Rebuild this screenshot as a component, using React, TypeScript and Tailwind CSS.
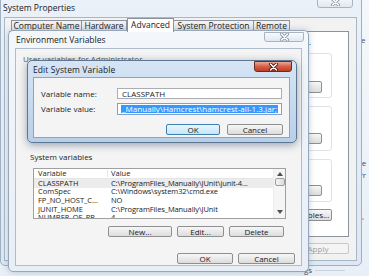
import clsx from 'clsx';

function Btn({ label, className, primary, disabled }: { label: string; className?: string; primary?: boolean; disabled?: boolean }) {
  return (
    <div
      className={clsx(
        'flex items-center justify-center rounded-[2px] border text-[8px] leading-none',
        primary
          ? 'border-[#3c7fb1] bg-linear-to-b from-[#e9f6fd] to-[#c6e5f6]'
          : disabled
          ? 'border-[#c9c9c9] bg-[#f4f4f4] text-[#a0a0a0]'
          : 'border-[#8f8f8f] bg-linear-to-b from-[#f7f7f7] to-[#dcdcdc]',
        className
      )}
    >
      {label}
    </div>
  );
}

function CloseBtn({ active, className }: { active?: boolean; className?: string }) {
  return (
    <div
      className={clsx(
        'absolute flex items-center justify-center rounded-b-[3px] border',
        active
          ? 'border-[#6b2b20] bg-linear-to-b from-[#eaa898] via-[#d45f48] to-[#c13b26]'
          : 'border-[#a8b4c3] bg-linear-to-b from-[#f8fafc] to-[#e2e8f0]',
        className
      )}
    >
      <svg width="11" height="8" viewBox="0 0 11 8">
        <path d="M2.5 1 L8.5 7 M8.5 1 L2.5 7" stroke={active ? '#4a140c' : '#8a98aa'} strokeWidth="3.2" strokeLinecap="round" />
        <path d="M2.5 1 L8.5 7 M8.5 1 L2.5 7" stroke="#fff" strokeWidth="1.6" strokeLinecap="round" />
      </svg>
    </div>
  );
}

const sysRows = [
  ['CLASSPATH', 'C:\\ProgramFiles_Manually\\JUnit\\junit-4...'],
  ['ComSpec', 'C:\\Windows\\system32\\cmd.exe'],
  ['FP_NO_HOST_C...', 'NO'],
  ['JUNIT_HOME', 'C:\\ProgramFiles_Manually\\JUnit'],
  ['NUMBER_OF_PR...', '4'],
];

function SystemProperties() {
  return (
    <div className="absolute left-0 top-[-4px] flex h-[270px] w-[362px] flex-col rounded-[5px] border border-[#9fb0c2] bg-linear-to-b from-[#eaf1f9] to-[#dde8f4]">
      <div className="h-[20px] pl-[2px] pt-[5px] text-[8.5px] leading-[12px] text-[#1a1a1a]">System Properties</div>
      <CloseBtn className="right-[8px] top-[-1px] h-[12px] w-[36px]" />
      <div className="mb-[4px] ml-[3px] mr-[4px] flex flex-1 flex-col border border-[#a9b6c4] bg-[#f2f2f2] pl-[4px] pr-[7px] pt-[2px]">
        <div className="ml-[2px] flex h-[11px] items-end text-[8.5px] leading-none">
          <div className="flex h-[11px] w-[71px] items-center justify-center border border-b-0 border-[#8d939c] bg-linear-to-b from-[#f3f3f3] to-[#e3e3e3]">Computer Name</div>
          <div className="flex h-[11px] w-[45px] items-center justify-center border border-b-0 border-l-0 border-[#8d939c] bg-linear-to-b from-[#f3f3f3] to-[#e3e3e3]">Hardware</div>
          <div className="relative z-10 -mb-px flex h-[14px] w-[47px] items-center justify-center border border-b-0 border-[#8d939c] bg-white">Advanced</div>
          <div className="flex h-[11px] w-[80px] items-center justify-center border border-b-0 border-l-0 border-[#8d939c] bg-linear-to-b from-[#f3f3f3] to-[#e3e3e3]">System Protection</div>
          <div className="flex h-[11px] w-[36px] items-center justify-center border border-b-0 border-l-0 border-[#8d939c] bg-linear-to-b from-[#f3f3f3] to-[#e3e3e3]">Remote</div>
        </div>
        <div className="flex h-[206px] flex-col border border-[#8d939c] bg-white px-[16px]">
          {/* only the end of this line shows past the Environment Variables window */}
          <div className="ml-auto mr-[21px] mt-[5px] flex w-[8px] justify-end overflow-hidden whitespace-nowrap text-[8px] leading-[10px]">
            You must be logged on as an Administrator to make most of these changes.
          </div>
          <div className="mt-[6px] flex h-[45px] items-end justify-end rounded-[3px] border border-[#dde3e8] pb-[4px] pr-[9px]">
            <Btn label="Settings..." className="h-[12px] w-[68px]" />
          </div>
          <div className="mt-[8px] flex h-[45px] items-end justify-end rounded-[3px] border border-[#dde3e8] pb-[6px] pr-[9px]">
            <Btn label="Settings..." className="h-[11px] w-[68px]" />
          </div>
          <div className="mt-[8px] flex h-[43px] items-end justify-end rounded-[3px] border border-[#dde3e8] pb-[5px] pr-[9px]">
            <Btn label="Settings..." className="h-[11px] w-[68px]" />
          </div>
          <div className="mt-[7px] flex justify-end">
            <Btn label="Environment Variables..." className="h-[12px] w-[96px]" />
          </div>
        </div>
        <div className="mt-[6px] flex justify-end gap-[5px]">
          <Btn label="OK" className="h-[11px] w-[58px]" />
          <Btn label="Cancel" className="h-[11px] w-[58px]" />
          <Btn label="Apply" disabled className="h-[11px] w-[60px] pr-[2px]" />
        </div>
      </div>
    </div>
  );
}

function EnvWindow() {
  return (
    <div className="absolute left-[8px] top-[30px] flex h-[242px] w-[301px] flex-col rounded-[5px] border border-[#97a7b9] bg-linear-to-b from-[#f3f7fb] to-[#e7eef6] shadow-[0_0_6px_rgba(80,110,150,0.35)]">
      <div className="h-[17px] pl-[7px] pt-[3px] text-[8.5px] leading-[12px]">Environment Variables</div>
      <CloseBtn className="left-[255px] top-[1px] h-[10px] w-[40px]" />
      <div className="mx-[6px] mb-[5px] flex flex-1 flex-col border border-[#aebccb] bg-[#f4f4f4] text-[8px] leading-none">
        <div className="mt-[5px] pl-[7px] leading-[10px] text-[#555]">User variables for Administrator</div>
        <div className="ml-[17px] mt-[4px] h-[51px] w-[253px] border border-[#a0a0a0] bg-white" />
        <div className="mt-[6px] h-[11px]" />
        <div className="mt-[16px] pl-[14px] leading-[10px]">System variables</div>
        <div className="ml-[17px] mt-[6px] flex h-[51px] w-[253px] overflow-hidden border border-[#a0a0a0] bg-white text-[7.5px]">
          <div className="flex flex-1 flex-col">
            <div className="flex h-[10px] shrink-0 items-center border-b border-[#e5e5e5]">
              <div className="w-[74px] border-r border-[#e5e5e5] pl-[4px]">Variable</div>
              <div className="pl-[3px]">Value</div>
            </div>
            {sysRows.map(([name, value], i) => (
              <div key={name} className={clsx('flex h-[8.7px] shrink-0 items-center', i === 0 && 'bg-[#ececec]')}>
                <div className="w-[74px] pl-[4px]">{name}</div>
                <div className="whitespace-nowrap pl-[3px] tracking-[-0.1px]">{value}</div>
              </div>
            ))}
          </div>
          <div className="flex w-[12px] flex-col items-center border-l border-[#ececec] bg-[#f5f5f5]">
            <svg width="6" height="4" viewBox="0 0 6 4" className="mt-[3px]"><path d="M0 4 L3 0 L6 4Z" fill="#505050" /></svg>
            <div className="mt-[2px] h-[8px] w-[10px] rounded-[2px] border border-[#9c9c9c] bg-linear-to-r from-[#f4f4f4] to-[#dcdcdc]" />
            <div className="flex-1" />
            <svg width="6" height="4" viewBox="0 0 6 4" className="mb-[4px]"><path d="M0 0 L3 4 L6 0Z" fill="#505050" /></svg>
          </div>
        </div>
        <div className="mt-[7px] flex h-[11px] gap-[5px] pl-[92px]">
          <Btn label="New..." className="w-[64px]" />
          <Btn label="Edit..." className="w-[47px]" />
          <Btn label="Delete" className="w-[55px]" />
        </div>
        <div className="mt-[16px] flex h-[11px] gap-[5px] pl-[161px]">
          <Btn label="OK" className="w-[56px]" />
          <Btn label="Cancel" className="w-[57px]" />
        </div>
      </div>
    </div>
  );
}

function EditWindow() {
  return (
    <div className="absolute left-[27px] top-[60px] flex h-[83px] w-[270px] flex-col rounded-[5px] border border-[#5f7690] bg-linear-to-b from-[#d6e5f5] to-[#b7cfe9] shadow-[0_2px_8px_rgba(40,60,90,0.45)]">
      <div className="h-[16px] pl-[5px] pt-[3px] text-[8.5px] leading-[12px] tracking-[0.1px]">Edit System Variable</div>
      <CloseBtn active className="left-[226px] top-[0px] h-[11px] w-[38px]" />
      <div className="mb-[4px] ml-[5px] mr-[6px] flex flex-1 flex-col border border-[#8ea4bc] bg-[#f4f4f4] text-[8px] leading-none">
        <div className="mt-[10px] flex h-[11px] items-center">
          <div className="w-[83px] pl-[7px]">Variable name:</div>
          <div className="flex h-[11px] w-[165px] items-center border border-[#abadb3] bg-white pl-[4px]">CLASSPATH</div>
        </div>
        <div className="mt-[4px] flex h-[12px] items-center">
          <div className="w-[83px] pl-[7px]">Variable value:</div>
          <div className="flex h-[12px] w-[165px] items-center overflow-hidden border border-[#7da2ce] bg-white pl-[3px]">
            <span className="whitespace-nowrap bg-[#3399ff] px-px tracking-[0.05px] text-white">_Manually\Hamcrest\hamcrest-all-1.3.jar;</span>
          </div>
        </div>
        <div className="mt-[9px] flex h-[11px] gap-[7px] pl-[132px]">
          <Btn label="OK" primary className="w-[54px]" />
          <Btn label="Cancel" className="w-[56px]" />
        </div>
      </div>
    </div>
  );
}

export default function App() {
  return (
    <div className="relative h-[276px] w-[369px] overflow-hidden bg-linear-to-b from-[#f4f8fc] to-[#e8eff7] font-['Open_Sans',sans-serif] text-[#1b1b1b]">
      <div className="absolute left-[357px] top-[36px] text-[8px] leading-none text-[#3a4f6e]">ve</div>
      <div className="absolute left-[358px] top-[159px] text-[8px] leading-none text-[#3a4f6e]">ce</div>
      <div className="absolute left-[358px] top-[171px] text-[8px] leading-none text-[#3a4f6e]">Pr</div>
      <div className="absolute left-[358px] top-[212px] text-[8px] leading-none text-[#3a4f6e]">il,</div>
      <div className="absolute left-[304px] top-[266px] flex items-center gap-[3px] text-[8px] leading-none text-[#3a4f6e]">
        gs<span className="h-px w-[30px] bg-[#c9d3de]" />
      </div>
      <SystemProperties />
      <EnvWindow />
      <EditWindow />
    </div>
  );
}
